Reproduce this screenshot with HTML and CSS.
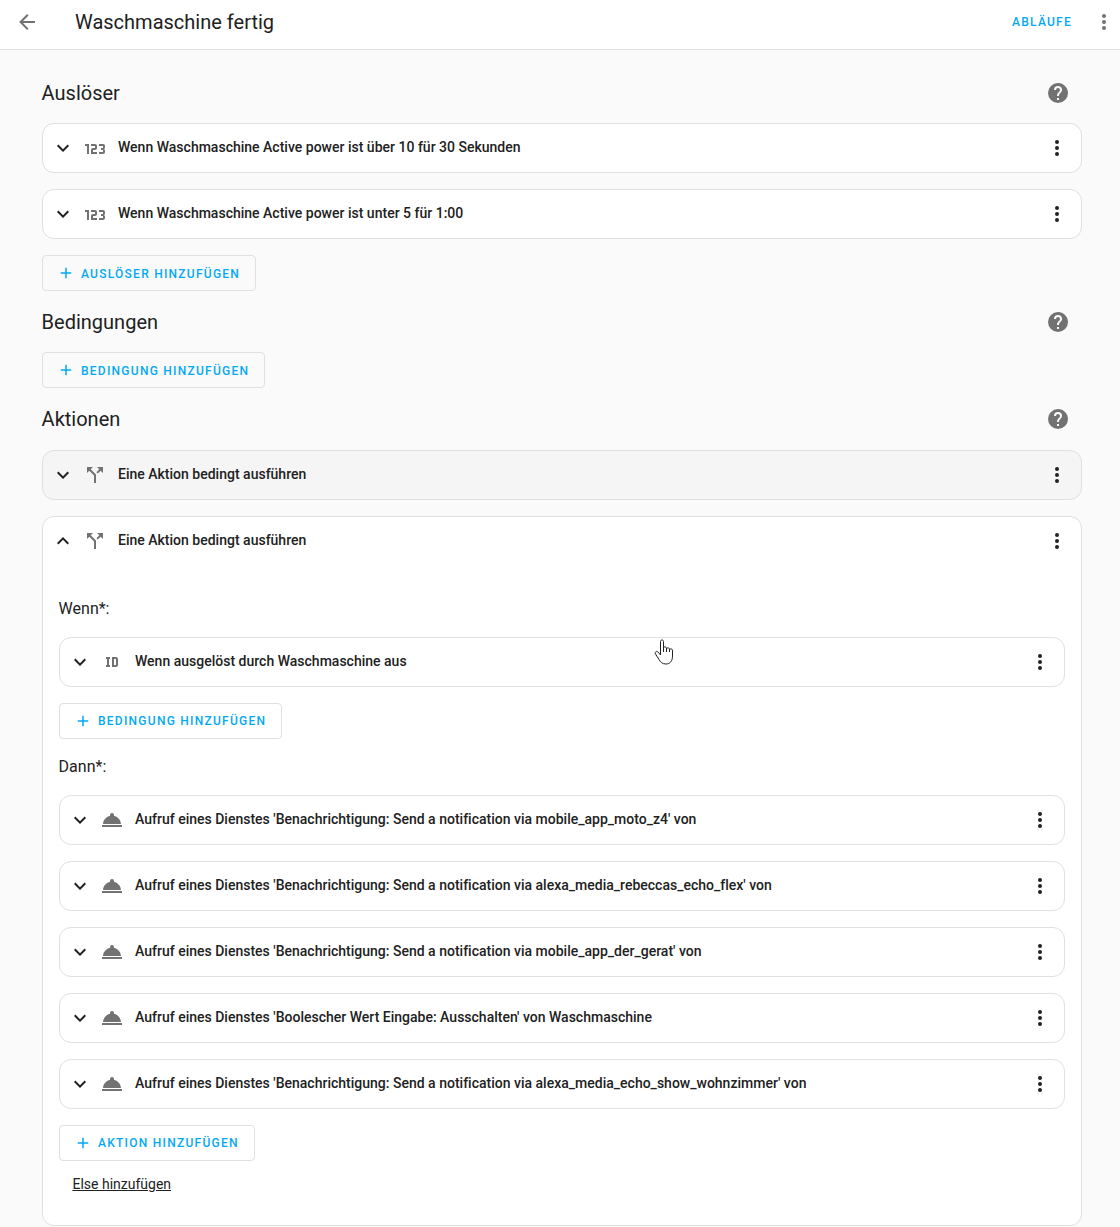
FILE: index.html
```html
<!DOCTYPE html>
<html lang="de">
<head>
<meta charset="utf-8">
<title>Waschmaschine fertig</title>
<link rel="stylesheet" href="styles.css">
</head>
<body>
<svg class="sprite" aria-hidden="true">
  <symbol id="i-back" viewBox="0 0 24 24"><path d="M20,11V13H8L13.5,18.5L12.08,19.92L4.16,12L12.08,4.08L13.5,5.5L8,11H20Z"/></symbol>
  <symbol id="i-dots" viewBox="0 0 24 24"><path d="M12,16A2,2 0 0,1 14,18A2,2 0 0,1 12,20A2,2 0 0,1 10,18A2,2 0 0,1 12,16M12,10A2,2 0 0,1 14,12A2,2 0 0,1 12,14A2,2 0 0,1 10,12A2,2 0 0,1 12,10M12,4A2,2 0 0,1 14,6A2,2 0 0,1 12,8A2,2 0 0,1 10,6A2,2 0 0,1 12,4Z"/></symbol>
  <symbol id="i-help" viewBox="0 0 24 24"><path d="M15.07,11.25L14.17,12.17C13.45,12.89 13,13.5 13,15H11V14.5C11,13.39 11.45,12.39 12.17,11.67L13.41,10.41C13.78,10.05 14,9.55 14,9C14,7.89 13.1,7 12,7A2,2 0 0,0 10,9H8A4,4 0 0,1 12,5A4,4 0 0,1 16,9C16,9.88 15.64,10.67 15.07,11.25M13,19H11V17H13M12,2A10,10 0 0,0 2,12A10,10 0 0,0 12,22A10,10 0 0,0 22,12C22,6.47 17.5,2 12,2Z"/></symbol>
  <symbol id="i-down" viewBox="0 0 24 24"><path d="M7.41,8.58L12,13.17L16.59,8.58L18,10L12,16L6,10L7.41,8.58Z"/></symbol>
  <symbol id="i-up" viewBox="0 0 24 24"><path d="M7.41,15.41L12,10.83L16.59,15.41L18,14L12,8L6,14L7.41,15.41Z"/></symbol>
  <symbol id="i-plus" viewBox="0 0 24 24"><path d="M19,13H13V19H11V13H5V11H11V5H13V11H19V13Z"/></symbol>
  <symbol id="i-num" viewBox="0 0 24 24"><path d="M4,17V9H2V7H6V17H4M22,15C22,16.11 21.1,17 20,17H16V15H20V13H18V11H20V9H16V7H20A2,2 0 0,1 22,9V10.5A1.5,1.5 0 0,1 20.5,12A1.5,1.5 0 0,1 22,13.5V15M14,15V17H8V13C8,11.89 8.9,11 10,11H12V9H8V7H12A2,2 0 0,1 14,9V11C14,12.11 13.1,13 12,13H10V15H14Z"/></symbol>
  <symbol id="i-split" viewBox="0 0 24 24"><path d="M14,4L16.29,6.29L13.41,9.17L14.83,10.59L17.71,7.71L20,10V4M10,4H4V10L6.29,7.71L11,12.41V20H13V11.59L7.71,6.29"/></symbol>
  <symbol id="i-id" viewBox="0 0 24 24"><path d="M10,7V9H9V15H10V17H6V15H7V9H6V7H10M16,7C17.11,7 18,7.9 18,9V15C18,16.11 17.11,17 16,17H12V7M16,9H14V15H16V9Z"/></symbol>
  <symbol id="i-bell" viewBox="0 0 24 24"><path d="M2,17H22V19H2V17M13.84,7.79C13.94,7.55 14,7.28 14,7A2,2 0 0,0 12,5A2,2 0 0,0 10,7C10,7.28 10.06,7.55 10.16,7.79C6.25,8.6 3.27,11.93 3,16H21C20.73,11.93 17.75,8.6 13.84,7.79Z"/></symbol>
</svg>

<header class="topbar">
  <svg class="icon icon-muted back"><use href="#i-back"/></svg>
  <h1 class="title">Waschmaschine fertig</h1>
  <a class="top-link">ABLÄUFE</a>
  <svg class="icon icon-muted top-menu"><use href="#i-dots"/></svg>
</header>

<main class="content">
  <div class="section-head">
    <h2 class="section-title">Auslöser</h2>
    <svg class="icon icon-muted"><use href="#i-help"/></svg>
  </div>
  <div class="stack">
    <div class="card row">
      <svg class="icon chevron"><use href="#i-down"/></svg>
      <svg class="icon icon-muted kind kind-num"><use href="#i-num"/></svg>
      <span class="row-text">Wenn Waschmaschine Active power ist über 10 für 30 Sekunden</span>
      <svg class="icon menu"><use href="#i-dots"/></svg>
    </div>
    <div class="card row">
      <svg class="icon chevron"><use href="#i-down"/></svg>
      <svg class="icon icon-muted kind kind-num"><use href="#i-num"/></svg>
      <span class="row-text">Wenn Waschmaschine Active power ist unter 5 für 1:00</span>
      <svg class="icon menu"><use href="#i-dots"/></svg>
    </div>
    <a class="add-btn"><svg class="icon plus"><use href="#i-plus"/></svg><span class="add-label">AUSLÖSER HINZUFÜGEN</span></a>
  </div>

  <div class="section-head section-next">
    <h2 class="section-title">Bedingungen</h2>
    <svg class="icon icon-muted"><use href="#i-help"/></svg>
  </div>
  <div class="stack">
    <a class="add-btn"><svg class="icon plus"><use href="#i-plus"/></svg><span class="add-label">BEDINGUNG HINZUFÜGEN</span></a>
  </div>

  <div class="section-head section-next">
    <h2 class="section-title">Aktionen</h2>
    <svg class="icon icon-muted"><use href="#i-help"/></svg>
  </div>
  <div class="stack stack-actions">
    <div class="card row card-disabled">
      <svg class="icon chevron"><use href="#i-down"/></svg>
      <svg class="icon icon-muted kind"><use href="#i-split"/></svg>
      <span class="row-text">Eine Aktion bedingt ausführen</span>
      <svg class="icon menu"><use href="#i-dots"/></svg>
    </div>
    <div class="card expanded">
      <div class="row row-plain">
        <svg class="icon chevron"><use href="#i-up"/></svg>
        <svg class="icon icon-muted kind"><use href="#i-split"/></svg>
        <span class="row-text">Eine Aktion bedingt ausführen</span>
        <svg class="icon menu"><use href="#i-dots"/></svg>
      </div>
      <div class="card-body">
        <h3 class="label label-if">Wenn*:</h3>
        <div class="stack">
          <div class="card row">
            <svg class="icon chevron"><use href="#i-down"/></svg>
            <svg class="icon icon-muted kind"><use href="#i-id"/></svg>
            <span class="row-text">Wenn ausgelöst durch Waschmaschine aus</span>
            <svg class="icon menu"><use href="#i-dots"/></svg>
          </div>
          <a class="add-btn"><svg class="icon plus"><use href="#i-plus"/></svg><span class="add-label">BEDINGUNG HINZUFÜGEN</span></a>
        </div>
        <h3 class="label label-then">Dann*:</h3>
        <div class="stack">
          <div class="card row">
            <svg class="icon chevron"><use href="#i-down"/></svg>
            <svg class="icon icon-muted kind"><use href="#i-bell"/></svg>
            <span class="row-text">Aufruf eines Dienstes 'Benachrichtigung: Send a notification via mobile_app_moto_z4' von</span>
            <svg class="icon menu"><use href="#i-dots"/></svg>
          </div>
          <div class="card row">
            <svg class="icon chevron"><use href="#i-down"/></svg>
            <svg class="icon icon-muted kind"><use href="#i-bell"/></svg>
            <span class="row-text">Aufruf eines Dienstes 'Benachrichtigung: Send a notification via alexa_media_rebeccas_echo_flex' von</span>
            <svg class="icon menu"><use href="#i-dots"/></svg>
          </div>
          <div class="card row">
            <svg class="icon chevron"><use href="#i-down"/></svg>
            <svg class="icon icon-muted kind"><use href="#i-bell"/></svg>
            <span class="row-text">Aufruf eines Dienstes 'Benachrichtigung: Send a notification via mobile_app_der_gerat' von</span>
            <svg class="icon menu"><use href="#i-dots"/></svg>
          </div>
          <div class="card row">
            <svg class="icon chevron"><use href="#i-down"/></svg>
            <svg class="icon icon-muted kind"><use href="#i-bell"/></svg>
            <span class="row-text">Aufruf eines Dienstes 'Boolescher Wert Eingabe: Ausschalten' von Waschmaschine</span>
            <svg class="icon menu"><use href="#i-dots"/></svg>
          </div>
          <div class="card row">
            <svg class="icon chevron"><use href="#i-down"/></svg>
            <svg class="icon icon-muted kind"><use href="#i-bell"/></svg>
            <span class="row-text">Aufruf eines Dienstes 'Benachrichtigung: Send a notification via alexa_media_echo_show_wohnzimmer' von</span>
            <svg class="icon menu"><use href="#i-dots"/></svg>
          </div>
          <a class="add-btn"><svg class="icon plus"><use href="#i-plus"/></svg><span class="add-label">AKTION HINZUFÜGEN</span></a>
        </div>
        <a class="else-link">Else hinzufügen</a>
      </div>
    </div>
  </div>
</main>

<svg class="cursor" viewBox="0 0 22 26" aria-hidden="true">
  <path d="M6.5,2.5C6.5,0.5 9.5,0.5 9.5,2.5V9C9.5,7.5 12.5,7.5 12.5,9.2V10C12.5,8.5 15.5,8.5 15.5,10.2V11C15.5,9.5 18.5,9.5 18.5,11.2V17C18.5,22 16,25 12,25C8,25 6.5,23 5,20.5L1.5,15C0.5,13 2.5,11.5 4,13L6.5,16Z" fill="#fff" stroke="#222" stroke-width="1"/>
  <path d="M9.5,9V13M12.5,10V13M15.5,11V13" fill="none" stroke="#222" stroke-width="1"/>
</svg>
</body>
</html>
```
FILE: styles.css
```css
* {
  box-sizing: border-box;
}

html,
body {
  margin: 0;
  height: 1227px;
  overflow: hidden;
}

body {
  position: relative;
  background: #fafafa;
  color: #212121;
  font-family: Roboto, "Noto Sans", sans-serif;
}

.sprite {
  display: none;
}

.icon {
  display: block;
  flex: none;
  width: 24px;
  height: 24px;
  fill: #212121;
}

.icon-muted {
  fill: #727272;
}

.topbar {
  display: flex;
  align-items: center;
  height: 50px;
  padding: 0 4px 5px 15px;
  background: #fff;
  border-bottom: 1px solid #e0e0e0;
}

.title {
  flex: 1;
  margin: 0 0 0 36px;
  font-size: 20px;
  font-weight: 400;
  line-height: 28px;
}

.top-link {
  margin-right: 20px;
  color: #03a9f4;
  font-size: 12px;
  font-weight: 500;
  letter-spacing: 1.25px;
}

.content {
  padding: 23px 38px 0 42px;
}

.section-head {
  display: flex;
  align-items: center;
  justify-content: space-between;
  height: 40px;
  margin-bottom: 10px;
  padding-right: 12px;
}

.section-next {
  margin-top: 11px;
}

.section-title {
  margin: 0 0 0 -0.4px;
  font-size: 20px;
  font-weight: 400;
}

.stack {
  display: flex;
  flex-direction: column;
  align-items: stretch;
  gap: 16px;
}

.stack-actions {
  margin-top: 11px;
}

.card {
  background: #fff;
  border: 1px solid #e0e0e0;
  border-radius: 12px;
}

.card-disabled {
  background: #f5f5f5;
}

.row {
  display: flex;
  align-items: center;
  height: 50px;
  padding: 0 12px 0 8px;
}

.row-plain {
  height: 48px;
}

.chevron {
  margin-right: 8px;
}

.kind {
  margin-right: 11px;
}

.kind-num {
  margin-top: 2px;
}

.row-text {
  flex: 1;
  margin-bottom: 2px;
  font-size: 14px;
  font-weight: 500;
  line-height: 20px;
  letter-spacing: 0.005px;
}

.add-btn {
  display: flex;
  align-items: center;
  align-self: flex-start;
  height: 36px;
  padding: 0 15px 0 14px;
  background: transparent;
  border: 1px solid #e0e0e0;
  border-radius: 4px;
  color: #03a9f4;
  font-size: 12px;
  font-weight: 500;
}

.add-label {
  padding-top: 2px;
  letter-spacing: 1.25px;
}

.card-body .add-label {
  padding-top: 0;
}

.plus {
  width: 18px;
  height: 18px;
  margin-right: 6px;
  fill: #03a9f4;
}

.expanded {
  height: 710px;
}

.card-body {
  padding: 0 16px;
}

.label {
  margin: 0 0 0 -0.4px;
  font-size: 16px;
  font-weight: 400;
  line-height: 20px;
}

.label-if {
  margin-top: 34px;
  margin-bottom: 18px;
}

.label-then {
  margin-top: 18px;
  margin-bottom: 18px;
}

.else-link {
  display: inline-block;
  margin: 14px 0 0 13.5px;
  color: #212121;
  font-size: 14px;
  line-height: 18px;
  text-decoration: underline;
}

.cursor {
  position: absolute;
  left: 654px;
  top: 639px;
  width: 22px;
  height: 26px;
}
```
